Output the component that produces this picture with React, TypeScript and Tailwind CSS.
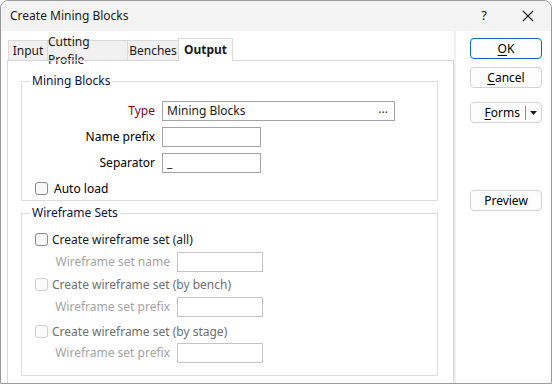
import React from 'react'

const font = "font-['Noto_Sans','Liberation_Sans',sans-serif]"

function Checkbox({ disabled }: { disabled?: boolean }) {
  return (
    <span
      className={
        disabled
          ? 'w-[13px] h-[13px] rounded-[3px] border border-[#cfcfcf] bg-[#fafafa] shrink-0'
          : 'w-[13px] h-[13px] rounded-[3px] border border-[#8b8b8b] bg-[#f7f7f7] shrink-0'
      }
    />
  )
}

function Field({ w, value, disabled, children }: { w: string; value?: string; disabled?: boolean; children?: React.ReactNode }) {
  return (
    <div
      className={`${w} h-[20px] flex items-center pl-[4px] pr-[6px] bg-white border ${
        disabled ? 'border-[#c4c4c4]' : 'border-[#a3a3a3]'
      }`}
    >
      <span className="flex-1 leading-none text-[#1a1a1a]">{value}</span>
      {children}
    </div>
  )
}

const tabs = [
  { label: 'Input', w: 'w-[40px]' },
  { label: 'Cutting Profile', w: 'w-[81px]' },
  { label: 'Benches', w: 'w-[52px]' },
]

export default function App() {
  return (
    <div className={`w-[552px] h-[384px] flex flex-col bg-white border border-[#9a9a9a] rounded-t-[8px] overflow-hidden text-[12px] text-black ${font}`}>
      {/* Title bar */}
      <div className="h-[30px] shrink-0 flex items-center bg-[#f3f3f3] pl-[9px] text-[#1a1a1a]">
        <span className="flex-1">Create Mining Blocks</span>
        <span className="w-[20px] text-center text-[13px] mr-[28px]">?</span>
        <svg width="12" height="12" viewBox="0 0 12 12" className="mr-[17px]">
          <path d="M1 1 L11 11 M11 1 L1 11" stroke="#1a1a1a" strokeWidth="1.1" fill="none" />
        </svg>
      </div>

      {/* Body */}
      <div className="flex flex-1 min-h-0">
        {/* Tab control */}
        <div className="ml-[6px] pt-[7px] flex flex-col border-r-2 border-[#f0f0f0]">
          <div className="flex items-end h-[22px] pl-[1px]">
            {tabs.map((t, i) => (
              <div
                key={t.label}
                className={`${t.w} h-[20px] flex items-center justify-center bg-[#f0f0f0] border border-b-0 border-[#dadada] text-[#1a1a1a] ${
                  i > 0 ? '-ml-[1px]' : ''
                }`}
              >
                {t.label}
              </div>
            ))}
            <div className="relative z-10 w-[55px] h-[23px] -ml-[1px] -mb-[1px] flex items-center justify-center bg-white border border-b-0 border-[#dadada] font-bold text-[#1a1a1a]">
              Output
            </div>
          </div>

          <div className="w-[447px] flex-1 border border-b-0 border-[#d6d6d6] pl-[13px] pt-[12px]">
            {/* Mining Blocks */}
            <fieldset className="w-[417px] border border-[#dcdcdc] pb-[3px]">
              <legend className="ml-[8px] px-[2px] leading-[16px] text-[#10103a]">Mining Blocks</legend>
              <div className="flex flex-col gap-[6px] mt-[12px]">
                <div className="flex items-center gap-[7px]">
                  <span className="w-[133px] text-right text-[#7d0a0a]">Type</span>
                  <Field w="w-[233px]" value="Mining Blocks">
                    <span className="text-[#333] leading-none -mt-[4px]">...</span>
                  </Field>
                </div>
                <div className="flex items-center gap-[7px]">
                  <span className="w-[133px] text-right">Name prefix</span>
                  <Field w="w-[99px]" />
                </div>
                <div className="flex items-center gap-[7px]">
                  <span className="w-[133px] text-right">Separator</span>
                  <Field w="w-[99px]" value="_" />
                </div>
              </div>
              <div className="h-[17px] mt-[7px] flex items-center pl-[13px] gap-[6px]">
                <Checkbox />
                <span>Auto load</span>
              </div>
            </fieldset>

            {/* Wireframe Sets */}
            <fieldset className="w-[417px] mt-[4px] border border-[#dcdcdc] pb-[12px]">
              <legend className="ml-[8px] px-[2px] leading-[16px] text-[#10103a]">Wireframe Sets</legend>
              <div className="h-[17px] mt-[10px] flex items-center pl-[13px] gap-[4px]">
                <Checkbox />
                <span className="text-[#1a1a1a]">Create wireframe set (all)</span>
              </div>
              <div className="flex items-center gap-[7px] mt-[4px]">
                <span className="w-[148px] text-right text-[#a3a3a3]">Wireframe set name</span>
                <Field w="w-[86px]" disabled />
              </div>
              <div className="h-[17px] mt-[4px] flex items-center pl-[13px] gap-[4px]">
                <Checkbox disabled />
                <span className="text-[#6f6f6f]">Create wireframe set (by bench)</span>
              </div>
              <div className="flex items-center gap-[7px] mt-[4px]">
                <span className="w-[148px] text-right text-[#a3a3a3]">Wireframe set prefix</span>
                <Field w="w-[86px]" disabled />
              </div>
              <div className="h-[17px] mt-[6px] flex items-center pl-[13px] gap-[4px]">
                <Checkbox disabled />
                <span className="text-[#6f6f6f]">Create wireframe set (by stage)</span>
              </div>
              <div className="flex items-center gap-[7px] mt-[3px]">
                <span className="w-[148px] text-right text-[#a3a3a3]">Wireframe set prefix</span>
                <Field w="w-[86px]" disabled />
              </div>
            </fieldset>
          </div>
        </div>

        {/* Buttons */}
        <div className="flex flex-col pl-[14px] pt-[7px]">
          <button className="w-[72px] h-[21px] rounded-[4px] border border-[#0f67c0] bg-[#fdfdfd] leading-none">
            <span className="underline underline-offset-2">O</span>K
          </button>
          <button className="w-[72px] h-[21px] mt-[8px] rounded-[4px] border border-[#d3d3d3] bg-[#fdfdfd] leading-none">
            <span className="underline underline-offset-2">C</span>ancel
          </button>
          <div className="w-[72px] h-[21px] mt-[14px] flex items-center rounded-[4px] border border-[#d3d3d3] bg-[#fdfdfd]">
            <span className="flex-1 text-right pr-[5px] leading-none">
              <span className="underline underline-offset-2">F</span>orms
            </span>
            <span className="w-px h-[14px] bg-[#8a8a8a]" />
            <span className="w-[15px] flex justify-center">
              <svg width="7" height="4" viewBox="0 0 7 4">
                <path d="M0 0 L7 0 L3.5 4 Z" fill="#1a1a1a" />
              </svg>
            </span>
          </div>
          <button className="w-[72px] h-[21px] mt-[67px] rounded-[4px] border border-[#d3d3d3] bg-[#fdfdfd] leading-none">
            Preview
          </button>
        </div>
      </div>
    </div>
  )
}
